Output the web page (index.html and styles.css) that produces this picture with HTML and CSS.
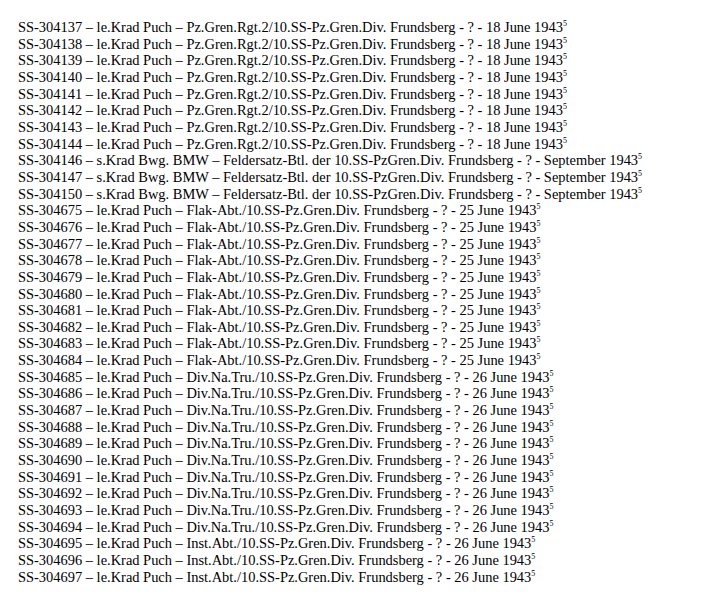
FILE: index.html
```html
<!DOCTYPE html>
<html>
<head>
<meta charset="utf-8">
<link rel="stylesheet" href="styles.css">
</head>
<body>
<div class="list">
<p class="row">SS-304137 – le.Krad Puch – Pz.Gren.Rgt.2/10.SS-Pz.Gren.Div. Frundsberg - ? - 18 June 1943<sup class="note">5</sup></p>
<p class="row">SS-304138 – le.Krad Puch – Pz.Gren.Rgt.2/10.SS-Pz.Gren.Div. Frundsberg - ? - 18 June 1943<sup class="note">5</sup></p>
<p class="row">SS-304139 – le.Krad Puch – Pz.Gren.Rgt.2/10.SS-Pz.Gren.Div. Frundsberg - ? - 18 June 1943<sup class="note">5</sup></p>
<p class="row">SS-304140 – le.Krad Puch – Pz.Gren.Rgt.2/10.SS-Pz.Gren.Div. Frundsberg - ? - 18 June 1943<sup class="note">5</sup></p>
<p class="row">SS-304141 – le.Krad Puch – Pz.Gren.Rgt.2/10.SS-Pz.Gren.Div. Frundsberg - ? - 18 June 1943<sup class="note">5</sup></p>
<p class="row">SS-304142 – le.Krad Puch – Pz.Gren.Rgt.2/10.SS-Pz.Gren.Div. Frundsberg - ? - 18 June 1943<sup class="note">5</sup></p>
<p class="row">SS-304143 – le.Krad Puch – Pz.Gren.Rgt.2/10.SS-Pz.Gren.Div. Frundsberg - ? - 18 June 1943<sup class="note">5</sup></p>
<p class="row">SS-304144 – le.Krad Puch – Pz.Gren.Rgt.2/10.SS-Pz.Gren.Div. Frundsberg - ? - 18 June 1943<sup class="note">5</sup></p>
<p class="row">SS-304146 – s.Krad Bwg. BMW – Feldersatz-Btl. der 10.SS-PzGren.Div. Frundsberg - ? - September 1943<sup class="note">5</sup></p>
<p class="row">SS-304147 – s.Krad Bwg. BMW – Feldersatz-Btl. der 10.SS-PzGren.Div. Frundsberg - ? - September 1943<sup class="note">5</sup></p>
<p class="row">SS-304150 – s.Krad Bwg. BMW – Feldersatz-Btl. der 10.SS-PzGren.Div. Frundsberg - ? - September 1943<sup class="note">5</sup></p>
<p class="row">SS-304675 – le.Krad Puch – Flak-Abt./10.SS-Pz.Gren.Div. Frundsberg - ? - 25 June 1943<sup class="note">5</sup></p>
<p class="row">SS-304676 – le.Krad Puch – Flak-Abt./10.SS-Pz.Gren.Div. Frundsberg - ? - 25 June 1943<sup class="note">5</sup></p>
<p class="row">SS-304677 – le.Krad Puch – Flak-Abt./10.SS-Pz.Gren.Div. Frundsberg - ? - 25 June 1943<sup class="note">5</sup></p>
<p class="row">SS-304678 – le.Krad Puch – Flak-Abt./10.SS-Pz.Gren.Div. Frundsberg - ? - 25 June 1943<sup class="note">5</sup></p>
<p class="row">SS-304679 – le.Krad Puch – Flak-Abt./10.SS-Pz.Gren.Div. Frundsberg - ? - 25 June 1943<sup class="note">5</sup></p>
<p class="row">SS-304680 – le.Krad Puch – Flak-Abt./10.SS-Pz.Gren.Div. Frundsberg - ? - 25 June 1943<sup class="note">5</sup></p>
<p class="row">SS-304681 – le.Krad Puch – Flak-Abt./10.SS-Pz.Gren.Div. Frundsberg - ? - 25 June 1943<sup class="note">5</sup></p>
<p class="row">SS-304682 – le.Krad Puch – Flak-Abt./10.SS-Pz.Gren.Div. Frundsberg - ? - 25 June 1943<sup class="note">5</sup></p>
<p class="row">SS-304683 – le.Krad Puch – Flak-Abt./10.SS-Pz.Gren.Div. Frundsberg - ? - 25 June 1943<sup class="note">5</sup></p>
<p class="row">SS-304684 – le.Krad Puch – Flak-Abt./10.SS-Pz.Gren.Div. Frundsberg - ? - 25 June 1943<sup class="note">5</sup></p>
<p class="row">SS-304685 – le.Krad Puch – Div.Na.Tru./10.SS-Pz.Gren.Div. Frundsberg - ? - 26 June 1943<sup class="note">5</sup></p>
<p class="row">SS-304686 – le.Krad Puch – Div.Na.Tru./10.SS-Pz.Gren.Div. Frundsberg - ? - 26 June 1943<sup class="note">5</sup></p>
<p class="row">SS-304687 – le.Krad Puch – Div.Na.Tru./10.SS-Pz.Gren.Div. Frundsberg - ? - 26 June 1943<sup class="note">5</sup></p>
<p class="row">SS-304688 – le.Krad Puch – Div.Na.Tru./10.SS-Pz.Gren.Div. Frundsberg - ? - 26 June 1943<sup class="note">5</sup></p>
<p class="row">SS-304689 – le.Krad Puch – Div.Na.Tru./10.SS-Pz.Gren.Div. Frundsberg - ? - 26 June 1943<sup class="note">5</sup></p>
<p class="row">SS-304690 – le.Krad Puch – Div.Na.Tru./10.SS-Pz.Gren.Div. Frundsberg - ? - 26 June 1943<sup class="note">5</sup></p>
<p class="row">SS-304691 – le.Krad Puch – Div.Na.Tru./10.SS-Pz.Gren.Div. Frundsberg - ? - 26 June 1943<sup class="note">5</sup></p>
<p class="row">SS-304692 – le.Krad Puch – Div.Na.Tru./10.SS-Pz.Gren.Div. Frundsberg - ? - 26 June 1943<sup class="note">5</sup></p>
<p class="row">SS-304693 – le.Krad Puch – Div.Na.Tru./10.SS-Pz.Gren.Div. Frundsberg - ? - 26 June 1943<sup class="note">5</sup></p>
<p class="row">SS-304694 – le.Krad Puch – Div.Na.Tru./10.SS-Pz.Gren.Div. Frundsberg - ? - 26 June 1943<sup class="note">5</sup></p>
<p class="row">SS-304695 – le.Krad Puch – Inst.Abt./10.SS-Pz.Gren.Div. Frundsberg - ? - 26 June 1943<sup class="note">5</sup></p>
<p class="row">SS-304696 – le.Krad Puch – Inst.Abt./10.SS-Pz.Gren.Div. Frundsberg - ? - 26 June 1943<sup class="note">5</sup></p>
<p class="row">SS-304697 – le.Krad Puch – Inst.Abt./10.SS-Pz.Gren.Div. Frundsberg - ? - 26 June 1943<sup class="note">5</sup></p>
</div>
</body>
</html>
```
FILE: styles.css
```css
html, body {
  margin: 0;
  padding: 0;
  background: #ffffff;
}
body {
  font-family: "Liberation Serif", "Times New Roman", serif;
  font-size: 14.45px;
  color: #000000;
}
.list {
  padding: 19px 0 0 18px;
}
.row {
  margin: 0;
  height: 16.67px;
  line-height: 16.67px;
  white-space: nowrap;
}
.note {
  font-size: 8px;
  line-height: 0;
  vertical-align: 6px;
}
```
